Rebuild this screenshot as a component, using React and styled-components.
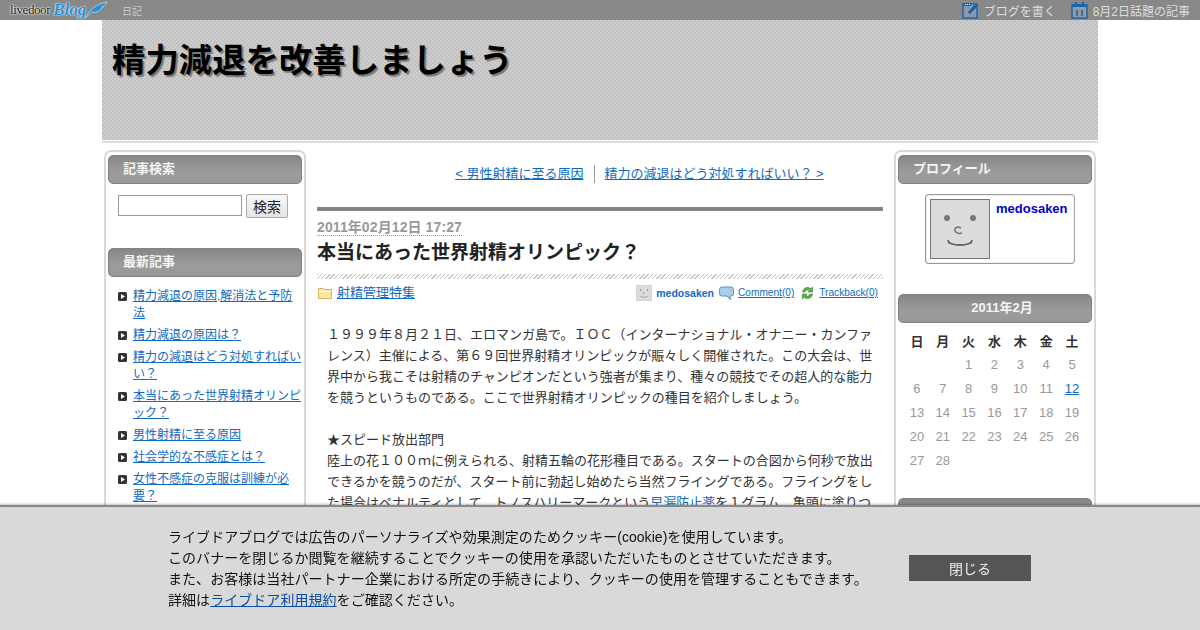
import React from "react";
import styled, { createGlobalStyle } from "styled-components";

const FONT = `"Liberation Sans", "Noto Sans CJK JP", sans-serif`;
const LINK = "#0f6bc4";

const Global = createGlobalStyle`
  html, body { margin: 0; padding: 0; height: 630px; overflow: hidden; background: #fff; }
  body { font-family: ${FONT}; color: #333; }
  * { box-sizing: border-box; }
`;

const TopBar = styled.div`
  height: 20px; background: #888; display: flex; align-items: center;
  padding: 0 10px; color: #ddd; font-size: 12px;
`;
const Logo = styled.div`display: flex; align-items: center; width: 112px; height: 20px;`;
const LogoWord = styled.span`
  font-family: "Liberation Serif", serif; font-size: 13px; color: #111; letter-spacing: -0.4px;
  text-shadow: 0 0 2px #fff, 0 0 2px #fff, 0 0 1px #fff; line-height: 20px;
`;
const LogoBlog = styled.span`
  font-family: "Liberation Serif", serif; font-style: italic; font-weight: 700; font-size: 17px; color: #2a8fd8; margin-left: 3px;
  text-shadow: 0 0 1px #fff, 0 0 2px #fff; line-height: 20px;
`;
const TopCat = styled.span`font-size: 10px; color: #ccc;`;
const TopRight = styled.div`margin-left: auto; display: flex; align-items: center;`;
const TopLink = styled.span`
  display: flex; align-items: center; gap: 5px; margin-left: 15px; color: #ddd; white-space: nowrap;
`;

const Page = styled.div`width: 996px; margin: 0 auto;`;
const Header = styled.div`
  height: 120px; padding: 21px 10px 0; font-size: 33.4px; line-height: 40px; font-weight: 700; color: #000;
  text-shadow: 2px 2px 1px #777;
  background-color: #c8c8c8;
  background-image: repeating-conic-gradient(#cdcdcd 0 25%, #c2c2c2 0 50%);
  background-size: 4px 4px;
`;
const HeaderRule = styled.div`height: 2px; margin-top: 1px; background: #ddd;`;
const Columns = styled.div`display: flex; align-items: flex-start; padding: 7px 2px 0; gap: 11px; height: 487px; overflow: hidden;`;

const Side = styled.aside`
  width: 202px; flex: none; height: 480px; padding: 3px 2px 0; background: #fff; overflow: hidden;
  border: 2px solid #ddd9cf; border-bottom: 0; border-radius: 7px 7px 0 0;
`;
const SideTitle = styled.h3`
  margin: 0; height: 29px; padding: 0 0 5px 14px;
  display: flex; flex: none; align-items: center; justify-content: ${p => p.$center ? "center" : "flex-start"};
  border: 1px solid #828282; border-radius: 5px;
  background: linear-gradient(#878787, #9c9c9c 60%, #989898);
  color: #f4f4f4; font-size: 13px; font-weight: 700;
`;
const SearchRow = styled.form`display: flex; gap: 4px; padding: 10px 0 0 10px; height: 64px; align-items: flex-start;`;
const SearchInput = styled.input`
  width: 124px; height: 21px; margin: 1px 0 0; border: 1px solid #999; background: #fff; padding: 0;
`;
const SearchButton = styled.button`
  width: 42px; height: 24px; padding: 0; border: 1px solid #aaa; border-radius: 2px;
  background: linear-gradient(#f8f8f8, #e4e4e4); color: #222; font: 14px ${FONT};
`;
const RecentList = styled.ul`
  list-style: none; margin: 0; padding: 11px 0 0 10px; display: flex; flex-direction: column; gap: 5px;
`;
const RecentItem = styled.li`
  display: flex; gap: 6px; font-size: 12px; line-height: 17px;
  svg { flex: none; margin-top: 4px; }
`;
const SideLink = styled.a`color: ${LINK}; text-decoration: underline;`;

const Main = styled.main`width: 566px; flex: none;`;
const Pager = styled.nav`
  display: flex; justify-content: center; align-items: center; height: 18px; margin: 15px 0 24px 79px; font-size: 13px;
`;
const PagerLink = styled.a`color: ${LINK}; text-decoration: underline; padding: 0 ${p => p.$first ? "10px" : "0"} 0 ${p => p.$first ? "0" : "10px"};
  border-left: ${p => p.$first ? "0" : "1px solid #999"}; line-height: 18px;`;
const ThickRule = styled.div`height: 4px; background: #848484;`;
const DateLine = styled.div`
  margin-top: 8px; height: 17px; font-size: 14px; line-height: 16px; font-weight: 700; color: #999; letter-spacing: .1px;
`;
const DateText = styled.span`border-bottom: 1px dotted #999; display: inline-block; height: 17px;`;
const Title = styled.h2`margin: 3px 0 0; font-size: 19px; line-height: 28px; font-weight: 700; color: #222;`;
const Hatch = styled.div`
  height: 5px; margin-top: 7px;
  background: repeating-linear-gradient(135deg, #c4c4c4 0 1px, #fff 1px 3px);
`;
const MetaRow = styled.div`display: flex; align-items: center; height: 19px; margin-top: 4px;`;
const Category = styled.a`
  margin-left: 5px; color: ${LINK}; font-size: 13px; text-decoration: underline; line-height: 19px;
`;
const MetaRight = styled.div`margin-left: auto; margin-right: 5px; display: flex; align-items: center; font-size: 10.15px;`;
const Author = styled.a`color: ${LINK}; font-weight: 700; margin: 0 5px 0 4px; font-size: 10.500px;`;
const MetaLink = styled.a`color: ${LINK}; text-decoration: underline; margin: 0 ${p => p.$gap || 0}px 0 ${p => p.$left}px;`;
const Body = styled.div`
  margin-top: 22px; padding: 0 10px; font-size: 13px; line-height: 21px; color: #333;
`;
const BodyLink = styled.a`color: ${LINK}; text-decoration: underline;`;

const Profile = styled.div`
  width: 150px; height: 70px; margin: 10px 0 0 27px; padding: 4px; display: flex; gap: 6px;
  border: 1px solid #999; border-right-color: #aaa; border-radius: 4px; box-shadow: inset 0 0 0 1px #eee;
`;
const ProfileName = styled.a`color: #0000cc; font-size: 13px; font-weight: 700; line-height: 20px;`;
const Spacer = styled.div`height: 30px;`;
const Calendar = styled.table`
  border-collapse: collapse; margin: 5px 0 0 6px; table-layout: fixed; width: 181px; font-size: 13px; color: #999;
`;
const CalHead = styled.th`height: 24px; padding: 0; color: #333; font-weight: 700; text-align: center;`;
const CalCell = styled.td`height: 24px; padding: 0; text-align: center;`;
const NextTitleWrap = styled.div`margin-top: 26px;`;

const Banner = styled.div`
  position: fixed; left: 0; right: 0; bottom: 0; height: 125px; background: #d9d9d9;
  border-top: 2px solid #888; box-shadow: 0 -1px 2px rgba(0,0,0,.25);
  display: flex; align-items: center; padding: 0 0 2px 168px; color: #111;
`;
const BannerText = styled.div`width: 741px; margin-top: 2px; font-size: 14px; line-height: 21px; white-space: nowrap; letter-spacing: .05px;`;
const BannerLink = styled.a`color: #0b4ea2; text-decoration: underline;`;
const CloseButton = styled.button`
  width: 122px; height: 26px; border: 0; padding: 0; background: #555; color: #eee; font: 14px ${FONT};
`;

const Feather = () => (
  <svg width="24" height="18" viewBox="0 0 34 18" preserveAspectRatio="none" style={{ marginLeft: -2, flex: "none" }}>
    <path d="M2 17 C8 9 16 3 33 1 C30 4 28 5 25 6 C27 6 27 7 24 8 C21 11 16 12 11 11 C8 13 5 15 2 17 Z" fill="#2a8fd8" stroke="#fff" strokeWidth=".6" />
  </svg>
);
const WriteIcon = () => (
  <svg width="17" height="17" viewBox="0 0 17 17">
    <rect x="1" y="2" width="14" height="14" fill="#8a9aa8" stroke="#1c63a8" strokeWidth="1.4" />
    <path d="M1 1h8v3H1z" fill="#1c63a8" /><path d="M3 2h1v1H3zM5 2h1v1H5zM7 2h1v1H7z" fill="#fff" />
    <path d="M5 13l1-3 7-8 3 2-8 8z" fill="#1c63a8" /><path d="M5 13l1-2 1 1z" fill="#fff" />
  </svg>
);
const CalIcon = () => (
  <svg width="17" height="17" viewBox="0 0 17 17">
    <rect x="1" y="3" width="15" height="13" fill="#8f9ba5" stroke="#1c63a8" strokeWidth="1.4" />
    <rect x="1" y="2" width="15" height="3" fill="#1c63a8" />
    <path d="M4 0h2v3H4zM11 0h2v3h-2z" fill="#1c63a8" />
    <path d="M6 8v6M11 8v6" stroke="#1c4f80" strokeWidth="1.2" />
  </svg>
);
const Bullet = () => (
  <svg width="9" height="9" viewBox="0 0 9 9">
    <rect width="9" height="9" rx="1.5" fill="#333" /><path d="M3 2l4 2.5L3 7z" fill="#fff" />
  </svg>
);
const Folder = () => (
  <svg width="14" height="12" viewBox="0 0 14 12" style={{ marginLeft: 1 }}>
    <path d="M.5 2.5V1.5h5l1 1h7v9H.5z" fill="#fbe6a6" stroke="#d8b35c" />
    <path d="M1.5 4.5h11" stroke="#fff" />
  </svg>
);
const Face = ({ size, border }) => (
  <svg width={size} height={size} viewBox="0 0 60 60" style={{ flex: "none", display: "block" }}>
    <rect x=".5" y=".5" width="59" height="59" fill="#dcdcdc" stroke={border} />
    <circle cx="17" cy="19" r="3" fill="#777" /><circle cx="43" cy="19" r="3" fill="#777" />
    <path d="M31 29c-4-2-7 0-6 3 1 2 4 3 7 2" fill="none" stroke="#777" strokeWidth="1.6" />
    <path d="M18 43c6 4 18 4 24 0M18 41l1 3M42 41l-1 3" fill="none" stroke="#666" strokeWidth="1.8" />
  </svg>
);
const CommentIcon = () => (
  <svg width="15" height="14" viewBox="0 0 15 14">
    <path d="M3 1h9a2.500 2.500 0 0 1 2.500 2.500v4A2.500 2.500 0 0 1 12 10h-1l.5 3.500L8 10H3A2.500 2.500 0 0 1 .5 7.500v-4A2.500 2.500 0 0 1 3 1z" fill="#a9cdeb" stroke="#5d93c4" />
  </svg>
);
const TrackIcon = () => (
  <svg width="13" height="14" viewBox="0 0 13 14">
    <path d="M1.500 6C2 3 4 1.500 6.500 1.500c1.500 0 2.500.5 3.500 1.500L11.500 1v5H7l1.500-1.500C7 3.500 4.500 4 4 6z" fill="#59b04c" stroke="#2f7f2c" strokeWidth=".6" />
    <path d="M11.500 8c-.5 3-2.500 4.500-5 4.500-1.500 0-2.500-.5-3.500-1.500L1.500 13V8H6l-1.500 1.500c1.500 1 4 .5 4.500-1.500z" fill="#59b04c" stroke="#2f7f2c" strokeWidth=".6" />
  </svg>
);

const recent = [
  "精力減退の原因,解消法と予防法",
  "精力減退の原因は？",
  "精力の減退はどう対処すればいい？",
  "本当にあった世界射精オリンピック？",
  "男性射精に至る原因",
  "社会学的な不感症とは？",
  "女性不感症の克服は訓練が必要？",
];
const weeks = [
  ["", "", 1, 2, 3, 4, 5],
  [6, 7, 8, 9, 10, 11, 12],
  [13, 14, 15, 16, 17, 18, 19],
  [20, 21, 22, 23, 24, 25, 26],
  [27, 28, "", "", "", "", ""],
];

export default function App() {
  return (
    <>
      <Global />
      <TopBar>
        <Logo>
          <LogoWord>livedoor</LogoWord><LogoBlog>Blog</LogoBlog><Feather />
        </Logo>
        <TopCat>日記</TopCat>
        <TopRight>
          <TopLink><WriteIcon />ブログを書く</TopLink>
          <TopLink><CalIcon />8月2日話題の記事</TopLink>
        </TopRight>
      </TopBar>
      <Page>
        <Header>精力減退を改善しましょう</Header>
        <HeaderRule />
        <Columns>
          <Side>
            <SideTitle>記事検索</SideTitle>
            <SearchRow onSubmit={e => e.preventDefault()}>
              <SearchInput type="text" />
              <SearchButton>検索</SearchButton>
            </SearchRow>
            <SideTitle>最新記事</SideTitle>
            <RecentList>
              {recent.map(t => (
                <RecentItem key={t}><Bullet /><SideLink>{t}</SideLink></RecentItem>
              ))}
            </RecentList>
          </Side>
          <Main>
            <Pager>
              <PagerLink $first>&lt; 男性射精に至る原因</PagerLink>
              <PagerLink>精力の減退はどう対処すればいい？ &gt;</PagerLink>
            </Pager>
            <ThickRule />
            <DateLine><DateText>2011年02月12日 17:27</DateText></DateLine>
            <Title>本当にあった世界射精オリンピック？</Title>
            <Hatch />
            <MetaRow>
              <Folder />
              <Category>射精管理特集</Category>
              <MetaRight>
                <Face size={16} border="#bbb" />
                <Author>medosaken</Author>
                <CommentIcon />
                <MetaLink $left={4} $gap={7}>Comment(0)</MetaLink>
                <TrackIcon />
                <MetaLink $left={5}>Trackback(0)</MetaLink>
              </MetaRight>
            </MetaRow>
            <Body>
              １９９９年８月２１日、エロマンガ島で。ＩＯＣ（インターナショナル・オナニー・カンファレンス）主催による、第６９回世界射精オリンピックが賑々しく開催された。この大会は、世界中から我こそは射精のチャンピオンだという強者が集まり、種々の競技でその超人的な能力を競うというものである。ここで世界射精オリンピックの種目を紹介しましょう。
              <br /><br />
              ★スピード放出部門<br />
              陸上の花１００ｍに例えられる、射精五輪の花形種目である。スタートの合図から何秒で放出できるかを競うのだが、スタート前に勃起し始めたら当然フライングである。フライングをした場合はペナルティとして、トノスハリーマークという<BodyLink>早漏防止薬</BodyLink>を１グラム、亀頭に塗りつ
            </Body>
          </Main>
          <Side>
            <SideTitle>プロフィール</SideTitle>
            <Profile>
              <Face size={60} border="#777" />
              <ProfileName>medosaken</ProfileName>
            </Profile>
            <Spacer />
            <SideTitle $center>2011年2月</SideTitle>
            <Calendar>
              <thead>
                <tr>{["日", "月", "火", "水", "木", "金", "土"].map(d => <CalHead key={d}>{d}</CalHead>)}</tr>
              </thead>
              <tbody>
                {weeks.map((w, i) => (
                  <tr key={i}>
                    {w.map((d, j) => (
                      <CalCell key={j}>{d === 12 ? <SideLink>12</SideLink> : d}</CalCell>
                    ))}
                  </tr>
                ))}
              </tbody>
            </Calendar>
            <NextTitleWrap><SideTitle $center>最近のコメント</SideTitle></NextTitleWrap>
          </Side>
        </Columns>
      </Page>
      <Banner>
        <BannerText>
          ライブドアブログでは広告のパーソナライズや効果測定のためクッキー(cookie)を使用しています。<br />
          このバナーを閉じるか閲覧を継続することでクッキーの使用を承認いただいたものとさせていただきます。<br />
          また、お客様は当社パートナー企業における所定の手続きにより、クッキーの使用を管理することもできます。<br />
          詳細は<BannerLink>ライブドア利用規約</BannerLink>をご確認ください。
        </BannerText>
        <CloseButton>閉じる</CloseButton>
      </Banner>
    </>
  );
}
